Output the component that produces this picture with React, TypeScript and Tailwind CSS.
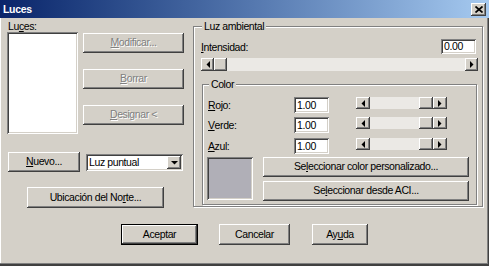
import React from "react";

const RAISED =
  "bg-[#d4d0c8] shadow-[inset_-1px_-1px_0_#404040,inset_1px_1px_0_#ffffff,inset_-2px_-2px_0_#808080,inset_2px_2px_0_#d4d0c8]";
const SUNKEN =
  "shadow-[inset_1px_1px_0_#808080,inset_-1px_-1px_0_#ffffff,inset_2px_2px_0_#404040,inset_-2px_-2px_0_#d4d0c8]";

function Btn({
  w,
  h,
  children,
  disabled,
  def,
  className = "",
}: {
  w: string;
  h: string;
  children: React.ReactNode;
  disabled?: boolean;
  def?: boolean;
  className?: string;
}) {
  const inner = (
    <div
      className={`${RAISED} w-full h-full flex items-center justify-center leading-none ${
        disabled ? "text-[#808080] [text-shadow:1px_1px_0_#ffffff]" : "text-black"
      }`}
    >
      <span className="pb-[1px]">{children}</span>
    </div>
  );
  if (def) {
    return (
      <div className={`${w} ${h} border border-black ${className}`}>{inner}</div>
    );
  }
  return <div className={`${w} ${h} ${className}`}>{inner}</div>;
}

function ArrowL() {
  return (
    <svg width="4" height="7" viewBox="0 0 4 7">
      <polygon points="4,0 4,7 0.5,3.5" fill="#000" />
    </svg>
  );
}
function ArrowR() {
  return (
    <svg width="4" height="7" viewBox="0 0 4 7">
      <polygon points="0,0 0,7 3.5,3.5" fill="#000" />
    </svg>
  );
}
function ArrowD() {
  return (
    <svg width="7" height="4" viewBox="0 0 7 4">
      <polygon points="0,0 7,0 3.5,3.5" fill="#000" />
    </svg>
  );
}

function HScroll({
  w,
  h,
  aw,
  thumbEnd,
}: {
  w: string;
  h: string;
  aw: string;
  thumbEnd?: boolean;
}) {
  return (
    <div className={`${w} ${h} flex`}>
      <div className={`${RAISED} ${aw} h-full flex items-center justify-center`}>
        <ArrowL />
      </div>
      <div
        className={`flex-1 h-full bg-[#ebe9e5] flex ${
          thumbEnd ? "justify-end" : "justify-start"
        }`}
      >
        <div className={`${RAISED} ${aw} h-full`} />
      </div>
      <div className={`${RAISED} ${aw} h-full flex items-center justify-center`}>
        <ArrowR />
      </div>
    </div>
  );
}

function TextBox({ w, h, value }: { w: string; h: string; value: string }) {
  return (
    <div
      className={`${w} ${h} bg-white ${SUNKEN} flex items-center pl-[3px] leading-none`}
    >
      {value}
    </div>
  );
}

function ColorRow({
  label,
  mt,
}: {
  label: React.ReactNode;
  mt: string;
}) {
  return (
    <div className={`flex items-start ${mt}`}>
      <div className="w-[91px] h-[16px] pl-[5px] flex items-center leading-none pt-[1px]">
        {label}
      </div>
      <TextBox w="w-[35px]" h="h-[16px]" value="1.00" />
      <div className="ml-[27px]">
        <HScroll w="w-[91px]" h="h-[12px]" aw="w-[14px]" thumbEnd />
      </div>
    </div>
  );
}

export default function App() {
  return (
    <div className="w-[489px] h-[266px] bg-[#d4d0c8] flex flex-col overflow-hidden font-['Liberation_Sans',Arial,sans-serif] text-[10.5px] tracking-[-0.4px] text-black shadow-[inset_-1px_-2px_0_#404040,inset_-2px_-3px_0_#808080,inset_1px_0_0_#ffffff]">
      {/* Title bar */}
      <div className="h-[18px] bg-gradient-to-r from-[#0a246a] to-[#a6caf0] flex items-center justify-between">
        <span className="pl-[3px] text-white font-bold text-[10.5px] tracking-[-0.3px] leading-none">
          Luces
        </span>
        <div
          className={`${RAISED} w-[15px] h-[13px] mr-[3px] flex items-center justify-center`}
        >
          <svg width="8" height="7" viewBox="0 0 8 7">
            <path d="M0.5 0.5 L7.5 6.5 M7.5 0.5 L0.5 6.5" stroke="#000" strokeWidth="1.7" />
          </svg>
        </div>
      </div>

      {/* Body */}
      <div className="flex flex-col">
        <div className="flex">
          {/* Left column */}
          <div className="w-[186px] ml-[7px] flex flex-col">
            <div className="flex">
              <div className="flex flex-col">
                <div className="h-[12px] mt-[2px] leading-[12px] pl-[1px]">
                  Lu<u>c</u>es:
                </div>
                <div className={`w-[71px] h-[102px] bg-white ${SUNKEN}`} />
              </div>
              <div className="ml-[5px] mt-[15px] flex flex-col gap-[16px]">
                <Btn w="w-[101px]" h="h-[20px]" disabled>
                  <u>M</u>odificar...
                </Btn>
                <Btn w="w-[101px]" h="h-[20px]" disabled>
                  <u>B</u>orrar
                </Btn>
                <Btn w="w-[101px]" h="h-[20px]" disabled>
                  <u>D</u>esignar &lt;
                </Btn>
              </div>
            </div>
            <div className="flex items-start mt-[18px]">
              <Btn w="w-[72px]" h="h-[20px]" className="ml-[1px]">
                <u>N</u>uevo...
              </Btn>
              <div
                className={`ml-[6px] mt-[2px] w-[97px] h-[17px] bg-white ${SUNKEN} flex items-center p-[2px]`}
              >
                <span className="flex-1 pl-[1px] leading-none">Luz puntual</span>
                <div className={`${RAISED} w-[14px] h-full flex items-center justify-center`}>
                  <ArrowD />
                </div>
              </div>
            </div>
            <Btn w="w-[137px]" h="h-[21px]" className="ml-[20px] mt-[15px]">
              Ubicación del No<u>r</u>te...
            </Btn>
          </div>

          {/* Right group: Luz ambiental */}
          <div className="mt-[8px] w-[290px] h-[181px] relative border border-[#808080] shadow-[inset_1px_1px_0_#ffffff,1px_1px_0_#ffffff] flex flex-col pl-[7px]">
            <span className="absolute -top-[7px] left-[8px] px-[2px] bg-[#d4d0c8] leading-[13px]">
              Luz ambiental
            </span>
            <div className="flex items-end justify-between mt-[12px] pr-[6px]">
              <span className="leading-[13px]">
                <u>I</u>ntensidad:
              </span>
              <TextBox w="w-[35px]" h="h-[15px]" value="0.00" />
            </div>
            <div className="mt-[4px]">
              <HScroll w="w-[277px]" h="h-[13px]" aw="w-[13px]" />
            </div>

            {/* Color group */}
            <div className="mt-[13px] ml-[1px] w-[275px] h-[121px] relative border border-[#808080] shadow-[inset_1px_1px_0_#ffffff,1px_1px_0_#ffffff] flex flex-col">
              <span className="absolute -top-[7px] left-[6px] px-[2px] bg-[#d4d0c8] leading-[13px]">
                Color
              </span>
              <ColorRow label={<><u>R</u>ojo:</>} mt="mt-[12px]" />
              <ColorRow label={<><u>V</u>erde:</>} mt="mt-[4px]" />
              <ColorRow label={<><u>A</u>zul:</>} mt="mt-[5px]" />
              <div className="flex mt-[3px] ml-[4px]">
                <div className={`w-[46px] h-[43px] bg-[#b0afb7] ${SUNKEN}`} />
                <div className="ml-[10px] flex flex-col gap-[4px]">
                  <Btn w="w-[206px]" h="h-[20px]">
                    Se<u>l</u>eccionar color personalizado...
                  </Btn>
                  <Btn w="w-[206px]" h="h-[20px]">
                    Se<u>l</u>eccionar desde ACI...
                  </Btn>
                </div>
              </div>
            </div>
          </div>
        </div>

        {/* Bottom buttons */}
        <div className="flex mt-[16px] ml-[121px]">
          <Btn w="w-[77px]" h="h-[21px]" def>
            Aceptar
          </Btn>
          <Btn w="w-[71px]" h="h-[21px]" className="ml-[21px]">
            Cancelar
          </Btn>
          <Btn w="w-[56px]" h="h-[21px]" className="ml-[22px]">
            Ay<u>u</u>da
          </Btn>
        </div>
      </div>
    </div>
  );
}
